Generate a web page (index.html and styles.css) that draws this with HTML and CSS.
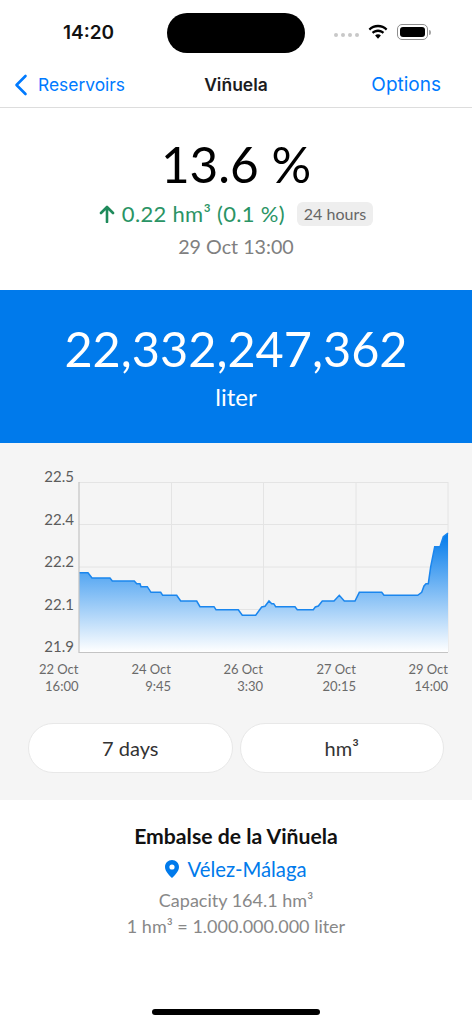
FILE: index.html
```html
<!DOCTYPE html>
<html lang="en">

<head>
    <meta charset="UTF-8">
    <meta name="viewport" content="width=device-width, initial-scale=1.0">
    <title>Viñuela</title>
    <link rel="stylesheet" href="styles.css">
</head>

<body>
<div class="screen">
    <!-- Status bar -->
    <div class="status-bar">
        <span class="clock">14:20</span>
        <div class="island"></div>
        <div class="status-icons">
            <div class="signal"><i></i><i></i><i></i><i></i></div>
            <svg class="wifi" width="22" height="16" viewBox="0 0 22 16">
                <path d="M11 3.2c3 0 5.800 1.200 7.900 3.200l1.500-1.700C17.900 2.200 14.600.7 11 .7S4.100 2.200 1.600 4.700l1.500 1.700C5.200 4.400 8 3.200 11 3.200z"/>
                <path d="M11 7.900c1.800 0 3.400.7 4.700 1.800l1.500-1.700C15.500 6.500 13.400 5.500 11 5.500S6.500 6.500 4.800 8l1.500 1.700C7.600 8.600 9.200 7.900 11 7.900z"/>
                <path d="M11 10.300c-1.100 0-2.100.4-2.900 1.100l2.900 3.300 2.900-3.300c-.8-.7-1.800-1.100-2.900-1.100z"/>
            </svg>
            <div class="battery"><div class="battery-fill"></div></div>
            <div class="battery-cap"></div>
        </div>
    </div>

    <!-- Nav bar -->
    <nav class="nav-bar">
        <a class="nav-back">
            <svg width="14" height="22" viewBox="0 0 14 22">
                <path d="M11.500 2 2.500 11l9 9" fill="none" stroke="#007aff" stroke-width="2.600" stroke-linecap="round" stroke-linejoin="round"/>
            </svg>
            Reservoirs
        </a>
        <span class="nav-title">Viñuela</span>
        <a class="nav-options">Options</a>
    </nav>

    <!-- Summary -->
    <section class="summary">
        <div class="percent">13.6 %</div>
        <div class="change">
            <svg width="16" height="18" viewBox="0 0 16 18">
                <path d="M8 17V2M2 8l6-6 6 6" fill="none" stroke="#1f8a5b" stroke-width="2.600" stroke-linecap="round" stroke-linejoin="round"/>
            </svg>
            <span class="change-value">0.22 hm³ (0.1 %)</span>
            <span class="tag">24 hours</span>
        </div>
        <div class="updated">29 Oct 13:00</div>
    </section>

    <!-- Liter counter -->
    <section class="counter">
        <div class="counter-value">22,332,247,362</div>
        <div class="counter-unit">liter</div>
    </section>

    <!-- Chart -->
    <section class="chart-section">
        <svg class="chart" width="472" height="260" viewBox="0 443 472 260">
            <defs>
                <linearGradient id="area" gradientUnits="userSpaceOnUse" x1="0" y1="533" x2="0" y2="652">
                    <stop offset="0" stop-color="#007aeb"/>
                    <stop offset="1" stop-color="#ffffff"/>
                </linearGradient>
            </defs>
            <g class="grid">
                <path d="M79 482.500H448M79 524.500H448M79 567H448M79 609.500H448"/>
                <path d="M171.500 482V652M263.500 482V652M356 482V652M448 482V652"/>
            </g>
            <path fill="url(#area)" d="M79 572.700H88L92 578H110L112.300 581H134.300L136.700 583.700H140L141 586.700H147.300L151 592.300H160.700L162.700 595.300H176.700L180.700 601H196.700L200 606.700H214L216 609.700H238.300L242.300 615.300H255.700L261.700 607L265 606.300L269 601L271.700 603.700H273.700L275.700 606.700H295L297.300 609.700H313.300L315.300 607L318.300 606L322.300 601H334L339.300 595.300L344.300 601H355L359.300 592.300H381.700L384 595.300H417.700L421.700 592.300L424 586L426 583.700H428.300L430.700 566.700L434.700 546.700H440L443.300 536.700L448 533V652H79Z"/>
            <path class="line" d="M79 572.700H88L92 578H110L112.300 581H134.300L136.700 583.700H140L141 586.700H147.300L151 592.300H160.700L162.700 595.300H176.700L180.700 601H196.700L200 606.700H214L216 609.700H238.300L242.300 615.300H255.700L261.700 607L265 606.300L269 601L271.700 603.700H273.700L275.700 606.700H295L297.300 609.700H313.300L315.300 607L318.300 606L322.300 601H334L339.300 595.300L344.300 601H355L359.300 592.300H381.700L384 595.300H417.700L421.700 592.300L424 586L426 583.700H428.300L430.700 566.700L434.700 546.700H440L443.300 536.700L448 533"/>
            <path class="axis" d="M79 482V652.500H448"/>
            <g class="y-labels">
                <text x="74" y="482">22.5</text>
                <text x="74" y="525">22.4</text>
                <text x="74" y="567">22.2</text>
                <text x="74" y="610">22.1</text>
                <text x="74" y="652">21.9</text>
            </g>
            <g class="x-labels">
                <text x="78.500" y="674">22 Oct</text>
                <text x="78.500" y="691">16:00</text>
                <text x="171" y="674">24 Oct</text>
                <text x="171" y="691">9:45</text>
                <text x="263" y="674">26 Oct</text>
                <text x="263" y="691">3:30</text>
                <text x="356" y="674">27 Oct</text>
                <text x="356" y="691">20:15</text>
                <text x="448" y="674">29 Oct</text>
                <text x="448" y="691">14:00</text>
            </g>
        </svg>
        <div class="chart-buttons">
            <button class="pill">7 days</button>
            <button class="pill">hm³</button>
        </div>
    </section>

    <!-- Reservoir info -->
    <section class="info">
        <h2>Embalse de la Viñuela</h2>
        <div class="place">
            <svg width="14" height="18" viewBox="0 0 14 18">
                <path fill-rule="evenodd" fill="#007aeb" d="M7 0C3.100 0 0 3.100 0 6.900 0 11.500 5.200 16 7 18c1.800-2 7-6.500 7-11.100C14 3.100 10.900 0 7 0zm0 4.400a2.600 2.600 0 1 1 0 5.200 2.600 2.600 0 0 1 0-5.200z"/>
            </svg>
            <span class="place-name">Vélez-Málaga</span>
        </div>
        <p>Capacity 164.1 hm³</p>
        <p>1 hm³ = 1.000.000.000 liter</p>
    </section>

    <div class="home-indicator"></div>
</div>
</body>

</html>
```

FILE: styles.css
```css
* {
    box-sizing: border-box;
}

body {
    margin: 0;
    background-color: #ffffff;
    font-family: "Lato", "Open Sans", sans-serif;
}

.screen {
    position: relative;
    width: 472px;
    height: 1024px;
    overflow: hidden;
}

.status-bar {
    position: relative;
    display: flex;
    align-items: center;
    justify-content: space-between;
    height: 62px;
    padding: 2px 41px 0 63px;
    font-family: "Inter", sans-serif;
}

.clock {
    font-size: 19px;
    font-weight: 600;
    color: #111;
}

.island {
    position: absolute;
    left: 167px;
    top: 13px;
    width: 138px;
    height: 40px;
    border-radius: 20px;
    background: #000;
}

.status-icons {
    display: flex;
    align-items: center;
}

.signal {
    display: flex;
    gap: 3px;
    margin-right: 8px;
    margin-top: 5px;
}

.signal i {
    width: 4px;
    height: 4px;
    border-radius: 50%;
    background: #c8c8c8;
}

.wifi {
    margin-right: 8px;
}

.battery {
    width: 31px;
    height: 16px;
    padding: 2px;
    border: 1px solid #8e8e8e;
    border-radius: 5px;
}

.battery-fill {
    height: 100%;
    border-radius: 3px;
    background: #000;
}

.battery-cap {
    width: 2px;
    height: 5px;
    margin-left: 1px;
    border-radius: 0 2px 2px 0;
    background: #a5a5a5;
}

.nav-bar {
    position: relative;
    display: flex;
    align-items: center;
    justify-content: space-between;
    height: 46px;
    padding: 0 31px 0 14px;
    border-bottom: 1px solid #dddddd;
    font-family: "Inter", sans-serif;
    font-size: 17.400px;
    color: #007aff;
}

.nav-back {
    display: flex;
    align-items: center;
    gap: 10px;
}

.nav-options {
    font-size: 19px;
}

.nav-title {
    position: absolute;
    left: 0;
    right: 0;
    text-align: center;
    font-weight: 600;
    font-size: 17.500px;
    color: #1c1c1e;
}

.summary {
    display: flex;
    flex-direction: column;
    align-items: center;
    height: 182px;
    padding-top: 27px;
}

.percent {
    font-size: 49.500px;
    line-height: 58px;
    color: #000;
}

.change {
    display: flex;
    align-items: center;
    gap: 7px;
    margin-top: 7px;
    font-size: 22px;
    letter-spacing: 0.300px;
    color: #2a9465;
}

.tag {
    margin-left: 5px;
    padding: 2px 7px;
    height: 24px;
    border-radius: 6px;
    background: #eeeeee;
    font-size: 16px;
    letter-spacing: 0;
    color: #666;
}

.updated {
    margin-top: 8px;
    font-size: 19.700px;
    color: #808080;
}

.counter {
    height: 153px;
    padding-top: 29px;
    background: #007aeb;
    color: #fff;
    text-align: center;
}

.counter-value {
    font-size: 48.600px;
    line-height: 58px;
}

.counter-unit {
    margin-top: 5px;
    font-size: 24px;
    line-height: 30px;
}

.chart-section {
    height: 357px;
    background: #f5f5f5;
}

.chart {
    display: block;
}

.grid path {
    fill: none;
    stroke: #e4e4e4;
    stroke-width: 1;
}

.line {
    fill: none;
    stroke: #1a86ee;
    stroke-width: 1.500;
}

.axis {
    fill: none;
    stroke: #c4c4c4;
    stroke-width: 1.200;
}

.y-labels text {
    font-size: 15px;
    fill: #5c5c5c;
    text-anchor: end;
}

.x-labels text {
    font-size: 13px;
    fill: #6a6a6a;
    text-anchor: end;
}

.chart-buttons {
    display: flex;
    gap: 7px;
    margin-top: 20px;
    padding-left: 28px;
}

.pill {
    width: 204.500px;
    height: 50px;
    border: 1px solid #e8e8e8;
    border-radius: 25px;
    background: #fff;
    font-family: inherit;
    font-size: 20px;
    color: #333;
}

.info {
    padding-top: 23px;
    text-align: center;
    font-size: 18px;
    color: #888;
}

.info h2 {
    margin: 0;
    font-size: 21.200px;
    line-height: 26px;
    font-weight: 700;
    color: #111;
}

.place {
    display: flex;
    align-items: center;
    justify-content: center;
    gap: 8px;
    margin-top: 6px;
    font-size: 20.300px;
    line-height: 28px;
    color: #007aeb;
}

.info p {
    margin: 0;
    line-height: 26px;
}

.place + p {
    margin-top: 4px;
}

.home-indicator {
    position: absolute;
    left: 152px;
    bottom: 9px;
    width: 168px;
    height: 6px;
    border-radius: 3px;
    background: #000;
}
```
